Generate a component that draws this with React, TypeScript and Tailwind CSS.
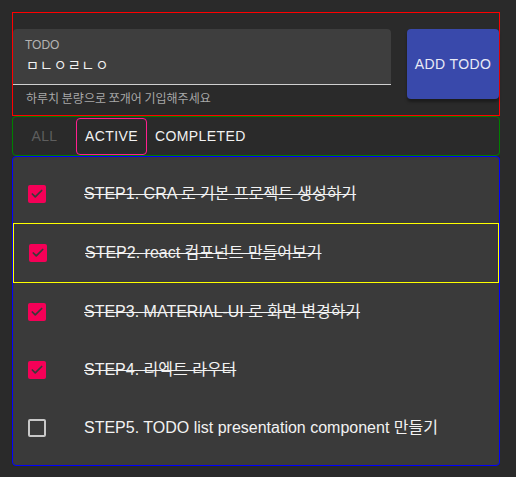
import { Check } from "lucide-react";

const todos = [
  { id: 1, text: "STEP1. CRA 로 기본 프로젝트 생성하기", done: true },
  { id: 2, text: "STEP2. react 컴포넌트 만들어보기", done: true, focus: true },
  { id: 3, text: "STEP3. MATERIAL-UI 로 화면 변경하기", done: true },
  { id: 4, text: "STEP4. 리엑트 라우터", done: true },
  { id: 5, text: "STEP5. TODO list presentation component 만들기", done: false },
];

const font = "font-['Liberation_Sans','Noto_Sans_CJK_KR',sans-serif]";

function Box({ checked }: { checked: boolean }) {
  if (checked) {
    return (
      <span className="flex h-[18px] w-[18px] shrink-0 items-center justify-center rounded-[2px] bg-[#f50057]">
        <Check className="h-[14px] w-[14px] text-[#3a3a3a]" strokeWidth={3} />
      </span>
    );
  }
  return <span className="h-[18px] w-[18px] shrink-0 rounded-[2px] border-2 border-[#c8c8c8]" />;
}

export default function App() {
  return (
    <div className={`min-h-[477px] bg-[#2a2a2a] pb-3 pl-3 pr-4 pt-3 ${font}`}>
      {/* input area */}
      <div className="h-[104px] border border-[#ff0000] pt-4">
        <div className="flex items-start justify-between">
          <div className="w-[378px]">
            <div className="h-[56px] rounded-t border-b border-[#cfcfcf] bg-[#3e3e3e] pl-3 pt-[9px]">
              <div className="text-[12px] leading-[14px] text-[#b3b3b3]">TODO</div>
              <div className="mt-[2px] pl-[1px] text-[14px] leading-[20px] tracking-[1px] text-[#f2f2f2] font-['Noto_Sans_CJK_KR',sans-serif]">
                ㅁㄴㅇㄹㄴㅇ
              </div>
            </div>
            <div className="mt-[5px] pl-[13px] text-[12px] leading-[16px] text-[#a8a8a8] font-['Noto_Sans_CJK_KR',sans-serif]">
              하루치 분량으로 쪼개어 기입해주세요
            </div>
          </div>
          <button className="h-[70px] w-[92px] rounded bg-[#3949ab] text-[14px] tracking-[0.4px] text-[#e8eaf6] shadow-[0_3px_3px_rgba(0,0,0,0.35)]">
            ADD TODO
          </button>
        </div>
      </div>

      {/* filter */}
      <div className="flex h-[40px] items-center rounded border border-[#008000]">
        <button className="h-[37px] w-[63px] text-[14px] tracking-[0.4px] text-[#5e5e5e]">ALL</button>
        <button className="h-[37px] rounded border border-[#ff1f8e] px-2 text-[14px] tracking-[0.4px] text-[#f2f2f2]">
          ACTIVE
        </button>
        <button className="h-[37px] px-2 text-[14px] tracking-[0.4px] text-[#f2f2f2]">COMPLETED</button>
      </div>

      {/* list */}
      <div className="rounded border border-[#0000ff] bg-[#3a3a3a] pb-2 pt-[8px]">
        {todos.map((t) => (
          <div
            key={t.id}
            className={`flex items-center px-[15px] ${t.focus ? "h-[60px] border border-[#ffff00]" : "h-[58px]"}`}
          >
            <Box checked={t.done} />
            <span
              className={`ml-[38px] text-[16px] text-[#f2f2f2] ${t.done ? "line-through decoration-[#f2f2f2]" : ""}`}
            >
              {t.text}
            </span>
          </div>
        ))}
      </div>
    </div>
  );
}
